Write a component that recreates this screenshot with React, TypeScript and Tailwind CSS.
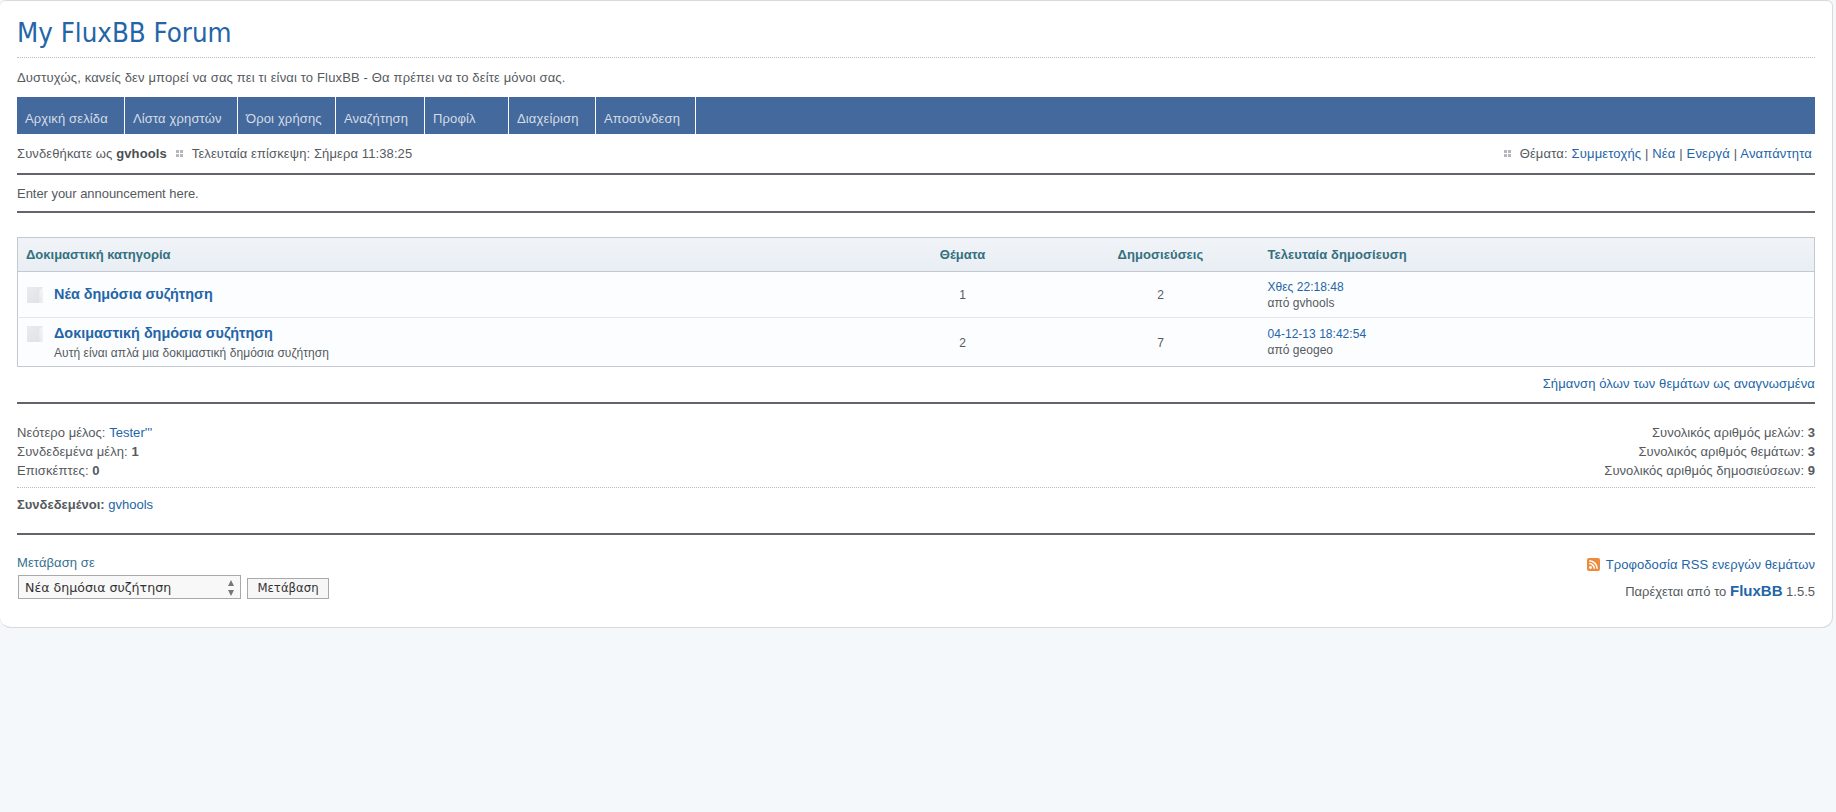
const sans = "font-['Liberation_Sans',Arial,sans-serif]";

const NAV_ITEMS = [
  { label: 'Αρχική σελίδα', width: 'w-[108px]' },
  { label: 'Λίστα χρηστών', width: 'w-[113px]' },
  { label: 'Όροι χρήσης', width: 'w-[98px]' },
  { label: 'Αναζήτηση', width: 'w-[89px]' },
  { label: 'Προφίλ', width: 'w-[84px]' },
  { label: 'Διαχείριση', width: 'w-[87px]' },
  { label: 'Αποσύνδεση', width: 'w-[100px]' },
];

const FORUMS = [
  {
    name: 'Νέα δημόσια συζήτηση',
    desc: '',
    topics: 1,
    posts: 2,
    last: 'Χθες 22:18:48',
    by: 'από gvhools',
    height: 'h-[46px]',
    pad: 'pt-[12px]',
  },
  {
    name: 'Δοκιμαστική δημόσια συζήτηση',
    desc: 'Αυτή είναι απλά μια δοκιμαστική δημόσια συζήτηση',
    topics: 2,
    posts: 7,
    last: '04-12-13 18:42:54',
    by: 'από geogeo',
    height: 'h-[49px]',
    pad: 'pt-[5px]',
  },
];

function Dots() {
  return (
    <svg width="7" height="7" viewBox="0 0 7 7" className="inline-block" fill="#b4b8bd">
      <rect x="0" y="0" width="3" height="3" />
      <rect x="4" y="0" width="3" height="3" />
      <rect x="0" y="4" width="3" height="3" />
      <rect x="4" y="4" width="3" height="3" />
    </svg>
  );
}

function ForumIcon() {
  return (
    <svg width="16" height="16" viewBox="0 0 16 16" className="mt-[3px] block shrink-0">
      <defs>
        <linearGradient id="forumIcon" x1="0" y1="0" x2="1" y2="1">
          <stop offset="0" stopColor="#e9ebed" />
          <stop offset="1" stopColor="#dfe2e5" />
        </linearGradient>
        <linearGradient id="forumIconEdge" x1="0" y1="1" x2="1" y2="0">
          <stop offset="0" stopColor="#e4e6e9" />
          <stop offset="1" stopColor="#f7f8f9" />
        </linearGradient>
      </defs>
      <rect width="16" height="16" fill="url(#forumIcon)" />
      <path d="M16 0 L16 16 L12 16 L12 4 Z" fill="url(#forumIconEdge)" />
    </svg>
  );
}

function RssIcon() {
  return (
    <svg width="13" height="13" viewBox="0 0 13 13" className="block">
      <rect width="13" height="13" rx="2" fill="#ee8a3c" />
      <circle cx="3.5" cy="9.5" r="1.4" fill="#fff" />
      <path d="M2.2 5.6a5.2 5.2 0 0 1 5.2 5.2M2.2 2.8a8 8 0 0 1 8 8" fill="none" stroke="#fff" strokeWidth="1.5" />
    </svg>
  );
}

function Rule() {
  return <div className="h-[2px] bg-[#62656a]" />;
}

export default function App() {
  return (
    <div className={`${sans} min-h-[812px] bg-[#f4f8fb] text-[13px] leading-[19px] text-[#555a60]`}>
      <div className="mr-[3px] h-[628px] rounded-b-[11px] rounded-t-[6px] border border-[#d8dadc] border-l-0 bg-white pl-[17px] pr-[17px]">
        <h1 className="h-[56px] pt-[14px] font-['DejaVu_Sans',sans-serif] text-[27.4px] leading-[36px] text-[#2365a8] [font-stretch:condensed]">
          My FluxBB Forum
        </h1>
        <div className="border-t border-dotted border-[#b8bcc0]" />
        <p className="h-[39px] pt-[10px] tracking-[0.15px]">Δυστυχώς, κανείς δεν μπορεί να σας πει τι είναι το FluxBB - Θα πρέπει να το δείτε μόνοι σας.</p>

        <nav className="flex h-[37px] bg-[#44699c]">
          {NAV_ITEMS.map((item) => (
            <div key={item.label} className={`${item.width} border-r border-white pl-[8px] pt-[12px] tracking-[0.14px] text-[#d4dde8]`}>
              {item.label}
            </div>
          ))}
        </nav>

        <div className="flex h-[39px] items-center justify-between pb-[1px] tracking-[0.11px]">
          <div className="flex items-center">
            <span>
              Συνδεθήκατε ως <strong className="text-[#4a4f55]">gvhools</strong>
            </span>
            <span className="mx-[9px] flex"><Dots /></span>
            <span>Τελευταία επίσκεψη: Σήμερα 11:38:25</span>
          </div>
          <div className="flex items-center pr-[3px]">
            <span className="mr-[9px] flex"><Dots /></span>
            <span className="tracking-[0.16px]">
              Θέματα: <a className="text-[#2365a8]">Συμμετοχής</a> | <a className="text-[#2365a8]">Νέα</a> |{' '}
              <a className="text-[#2365a8]">Ενεργά</a> | <a className="text-[#2365a8]">Αναπάντητα</a>
            </span>
          </div>
        </div>
        <Rule />
        <div className="flex h-[36px] items-center pt-[1px] tracking-[-0.04px]">Enter your announcement here.</div>
        <Rule />

        <div className="h-[24px]" />
        <table className="w-full table-fixed border-collapse border border-[#c4c9cf]">
          <thead>
            <tr className="h-[34px] border-b border-[#c4c9cf] bg-gradient-to-b from-[#f0f4f8] to-[#e9eef4] text-[#35707f]">
              <th className="px-[8px] text-left font-bold">Δοκιμαστική κατηγορία</th>
              <th className="w-[198px] text-center font-bold">Θέματα</th>
              <th className="w-[198px] text-center font-bold tracking-[0.08px]">Δημοσιεύσεις</th>
              <th className="w-[555px] px-[8px] text-left font-bold tracking-[0.08px]">Τελευταία δημοσίευση</th>
            </tr>
          </thead>
          <tbody className="bg-[#fcfdfe]">
            {FORUMS.map((forum, i) => (
              <tr key={forum.name} className={`${forum.height} ${i === 0 ? 'border-b border-[#e2e7ed]' : ''}`}>
                <td className="align-top">
                  <div className={`flex pl-[9px] ${forum.pad}`}>
                    <ForumIcon />
                    <div className="pl-[11px]">
                      <a className="block text-[14.4px] font-bold leading-[20px] text-[#2365a8]">{forum.name}</a>
                      {forum.desc && <p className="mt-[3px] text-[12px] leading-[14px] tracking-[0.05px]">{forum.desc}</p>}
                    </div>
                  </div>
                </td>
                <td className="pt-[2px] text-center text-[12px]">{forum.topics}</td>
                <td className="pt-[2px] text-center text-[12px]">{forum.posts}</td>
                <td className="px-[8px] text-[12px] leading-[16px] tracking-[0.03px]">
                  <a className="block text-[#2365a8]">{forum.last}</a>
                  <span>{forum.by}</span>
                </td>
              </tr>
            ))}
          </tbody>
        </table>

        <div className="flex h-[35px] items-center justify-end pb-[2px] tracking-[0.12px] text-[#2365a8]">Σήμανση όλων των θεμάτων ως αναγνωσμένα</div>
        <Rule />

        <div className="flex justify-between pt-[19px]">
          <div className="tracking-[0.09px]">
            <p className="tracking-[0.03px]">Νεότερο μέλος: <a className="text-[#2365a8]">Tester'''</a></p>
            <p>Συνδεδεμένα μέλη: <strong>1</strong></p>
            <p>Επισκέπτες: <strong>0</strong></p>
          </div>
          <div className="text-right tracking-[0.05px]">
            <p>Συνολικός αριθμός μελών: <strong>3</strong></p>
            <p>Συνολικός αριθμός θεμάτων: <strong>3</strong></p>
            <p>Συνολικός αριθμός δημοσιεύσεων: <strong>9</strong></p>
          </div>
        </div>
        <div className="mt-[7px] border-t border-dotted border-[#b8bcc0]" />
        <p className="flex h-[34px] items-center pb-[1px]">
          <strong>Συνδεδεμένοι:</strong>&nbsp;<a className="text-[#2365a8]">gvhools</a>
        </p>
        <div className="mt-[11px]"><Rule /></div>

        <div className="flex justify-between pt-[18px]">
          <div>
            <div className="tracking-[0.1px] text-[#35708f]">Μετάβαση σε</div>
            <div className="mt-[3px] flex items-end pl-[1px]">
              <div className="relative">
                <select className="block h-[24px] w-[223px] appearance-none border border-[#a9a9a9] bg-[#f8f8f8] pl-[6px] font-['DejaVu_Sans',sans-serif] text-[12.6px] text-[#333]">
                  <option>Νέα δημόσια συζήτηση</option>
                </select>
                <svg width="6" height="16" viewBox="0 0 6 16" className="absolute right-[7px] top-[5px]" fill="#777">
                  <path d="M3 0 L6 6 L0 6 Z M3 16 L0 10 L6 10 Z" />
                </svg>
              </div>
              <button className="ml-[6px] h-[21px] w-[82px] border border-[#a9a9a9] bg-[#f6f6f6] font-['DejaVu_Sans',sans-serif] text-[11.7px] text-[#333]">
                Μετάβαση
              </button>
            </div>
          </div>
          <div className="text-right">
            <div className="flex items-center justify-end pt-[2px]">
              <RssIcon />
              <a className="ml-[6px] tracking-[0.08px] text-[#2365a8]">Τροφοδοσία RSS ενεργών θεμάτων</a>
            </div>
            <p className="mt-[7px]">
              Παρέχεται από το <a className="text-[15px] font-bold text-[#2365a8]">FluxBB</a> 1.5.5
            </p>
          </div>
        </div>
      </div>
    </div>
  );
}
